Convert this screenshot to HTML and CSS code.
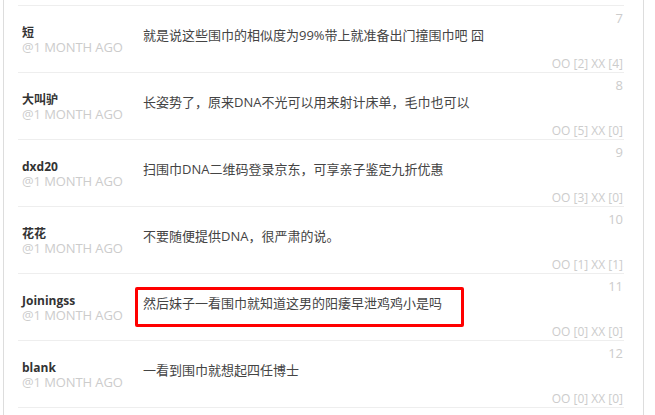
FILE: index.html
```html
<!DOCTYPE html>
<html>
<head>
    <meta charset="utf-8">
    <title>Comments</title>
    <link rel="stylesheet" href="styles.css">
</head>
<body>
<div class="comments">
    <ol class="commentlist">
        <li class="comment tail"></li>
        <li class="comment">
            <div class="num">7</div>
            <div class="main">
                <div class="author"><strong>短</strong><small>@1 month ago</small></div>
                <div class="text">就是说这些围巾的相似度为99%带上就准备出门撞围巾吧 囧</div>
            </div>
            <div class="vote">OO [2] XX [4]</div>
        </li>
        <li class="comment">
            <div class="num">8</div>
            <div class="main">
                <div class="author"><strong>大叫驴</strong><small>@1 month ago</small></div>
                <div class="text">长姿势了，原来DNA不光可以用来射计床单，毛巾也可以</div>
            </div>
            <div class="vote">OO [5] XX [0]</div>
        </li>
        <li class="comment">
            <div class="num">9</div>
            <div class="main">
                <div class="author"><strong>dxd20</strong><small>@1 month ago</small></div>
                <div class="text">扫围巾DNA二维码登录京东，可享亲子鉴定九折优惠</div>
            </div>
            <div class="vote">OO [3] XX [0]</div>
        </li>
        <li class="comment">
            <div class="num">10</div>
            <div class="main">
                <div class="author"><strong>花花</strong><small>@1 month ago</small></div>
                <div class="text">不要随便提供DNA，很严肃的说。</div>
            </div>
            <div class="vote">OO [1] XX [1]</div>
        </li>
        <li class="comment">
            <div class="num">11</div>
            <div class="main">
                <div class="author"><strong>Joiningss</strong><small>@1 month ago</small></div>
                <div class="text marked">然后妹子一看围巾就知道这男的阳痿早泄鸡鸡小是吗<span class="mark"></span></div>
            </div>
            <div class="vote">OO [0] XX [0]</div>
        </li>
        <li class="comment">
            <div class="num">12</div>
            <div class="main">
                <div class="author"><strong>blank</strong><small>@1 month ago</small></div>
                <div class="text">一看到围巾就想起四任博士</div>
            </div>
            <div class="vote">OO [0] XX [0]</div>
        </li>
    </ol>
</div>
</body>
</html>
```

FILE: styles.css
```css
* {
	padding: 0;
	margin: 0;
	box-sizing: border-box;
}

body {
	background: #fff;
	font-family: "Open Sans", "Noto Sans CJK SC", sans-serif;
	color: #333;
	overflow: hidden;
}

.comments {
	width: 641px;
	margin-left: 3px;
	border-left: 1px solid #ddd;
	border-right: 1px solid #ddd;
	padding: 0 19px 20px 14px;
	height: 415px;
}

.commentlist {
	list-style: none;
}

.comment {
	padding: 4px 0 1px 4px;
	border-bottom: 1px solid #eee;
	height: 67px;
}

.comment.tail {
	height: 6px;
	padding: 0;
}

.num {
	text-align: right;
	font-size: 13px;
	line-height: 16px;
	height: 16px;
	color: #ccc;
	padding-right: 1px;
}

.main {
	display: flex;
}

.author {
	width: 121px;
	flex-shrink: 0;
}

.author strong {
	display: block;
	font-size: 12px;
	line-height: 14px;
	font-weight: bold;
	color: #333;
}

.author small {
	display: block;
	font-size: 13px;
	line-height: 14px;
	color: #ccc;
	text-transform: uppercase;
	letter-spacing: -0.1px;
}

.text {
	font-size: 13px;
	line-height: 18px;
	color: #444;
}

.marked {
	position: relative;
}

.mark {
	position: absolute;
	left: -8px;
	top: -7px;
	width: 329px;
	height: 40px;
	border: 3px solid #f00;
	border-radius: 2px;
}

.vote {
	margin-top: 3px;
	text-align: right;
	font-size: 12px;
	line-height: 14px;
	color: #ccc;
	padding-right: 1px;
}
```
